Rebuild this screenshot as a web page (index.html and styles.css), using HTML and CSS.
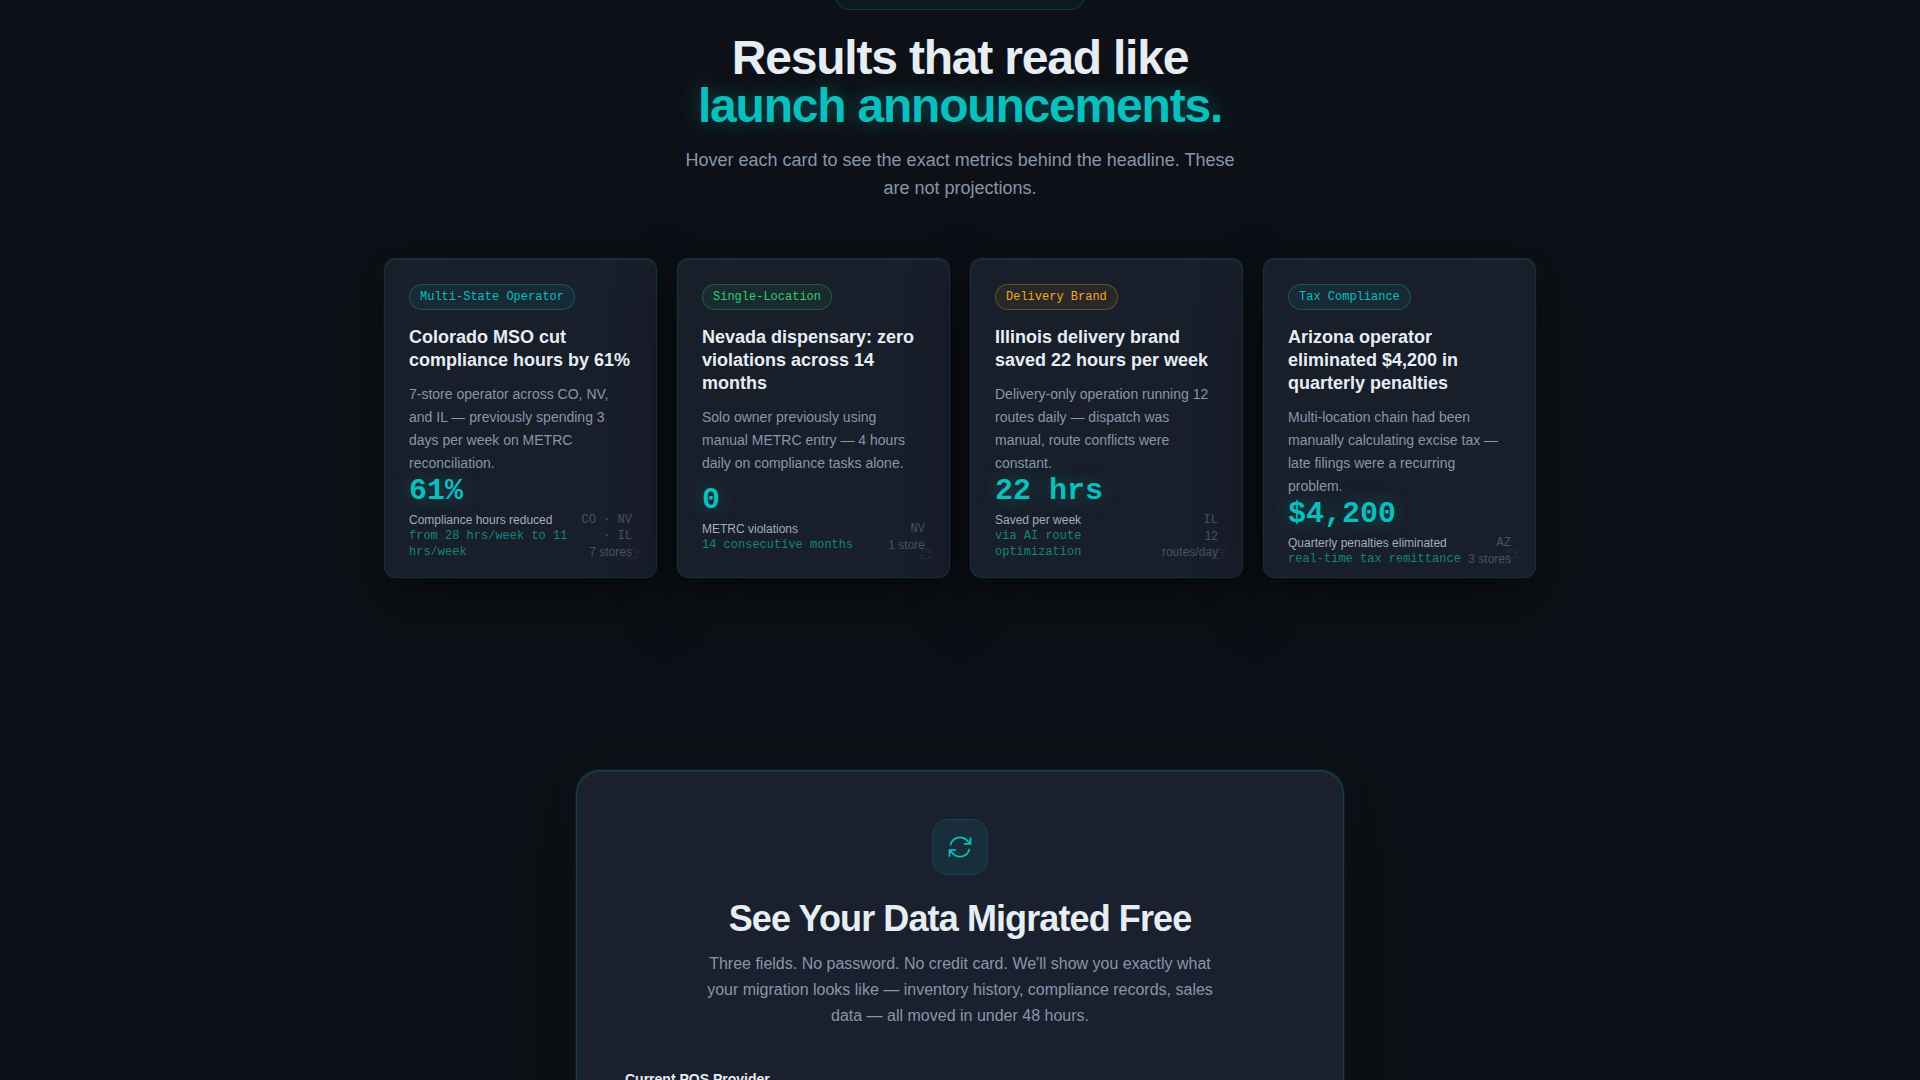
FILE: index.html
```html
<!DOCTYPE html>
<html lang="en">
<head>
<meta charset="utf-8">
<meta name="viewport" content="width=device-width, initial-scale=1">
<title>Results and free migration</title>
<link rel="stylesheet" href="styles.css">
</head>
<body>
<svg class="sprite" aria-hidden="true">
  <symbol id="refresh" viewBox="0 0 24 24">
    <path fill="none" stroke="currentColor" stroke-width="1.5" stroke-linecap="round" stroke-linejoin="round" d="M16.023 9.348h4.992v-.001M2.985 19.644v-4.992m0 0h4.992m-4.993 0 3.181 3.183a8.25 8.25 0 0 0 13.803-3.7M4.031 9.865a8.25 8.25 0 0 1 13.803-3.7l3.181 3.182m0-4.991v4.99"/>
  </symbol>
</svg>
<main>
  <section class="results">
    <div class="eyebrow"></div>
    <h2 class="results-title">Results that read like<br><span class="glow">launch announcements.</span></h2>
    <p class="results-lead">Hover each card to see the exact metrics behind the headline. These are not projections.</p>
    <div class="cards">
      <article class="card">
        <span class="tag tag-teal">Multi-State Operator</span>
        <h3 class="card-title">Colorado MSO cut compliance hours by 61%</h3>
        <p class="card-text">7-store operator across CO, NV, and IL — previously spending 3 days per week on METRC reconciliation.</p>
        <div class="card-foot">
          <div class="metric">
            <div class="value">61%</div>
            <div class="label">Compliance hours reduced</div>
            <div class="detail">from 28 hrs/week to 11 hrs/week</div>
          </div>
          <div class="meta">
            <div class="states">CO · NV · IL</div>
            <div>7 stores</div>
          </div>
        </div>
        <svg class="flip" aria-hidden="true"><use href="#refresh"/></svg>
      </article>
      <article class="card">
        <span class="tag tag-green">Single-Location</span>
        <h3 class="card-title">Nevada dispensary: zero violations across 14 months</h3>
        <p class="card-text">Solo owner previously using manual METRC entry — 4 hours daily on compliance tasks alone.</p>
        <div class="card-foot">
          <div class="metric">
            <div class="value">0</div>
            <div class="label">METRC violations</div>
            <div class="detail">14 consecutive months</div>
          </div>
          <div class="meta">
            <div class="states">NV</div>
            <div>1 store</div>
          </div>
        </div>
        <svg class="flip" aria-hidden="true"><use href="#refresh"/></svg>
      </article>
      <article class="card">
        <span class="tag tag-amber">Delivery Brand</span>
        <h3 class="card-title">Illinois delivery brand saved 22 hours per week</h3>
        <p class="card-text">Delivery-only operation running 12 routes daily — dispatch was manual, route conflicts were constant.</p>
        <div class="card-foot">
          <div class="metric">
            <div class="value">22 hrs</div>
            <div class="label">Saved per week</div>
            <div class="detail">via AI route optimization</div>
          </div>
          <div class="meta">
            <div class="states">IL</div>
            <div>12 routes/day</div>
          </div>
        </div>
        <svg class="flip" aria-hidden="true"><use href="#refresh"/></svg>
      </article>
      <article class="card">
        <span class="tag tag-teal">Tax Compliance</span>
        <h3 class="card-title">Arizona operator eliminated $4,200 in quarterly penalties</h3>
        <p class="card-text">Multi-location chain had been manually calculating excise tax — late filings were a recurring problem.</p>
        <div class="card-foot">
          <div class="metric">
            <div class="value">$4,200</div>
            <div class="label">Quarterly penalties eliminated</div>
            <div class="detail">real-time tax remittance</div>
          </div>
          <div class="meta">
            <div class="states">AZ</div>
            <div>3 stores</div>
          </div>
        </div>
        <svg class="flip" aria-hidden="true"><use href="#refresh"/></svg>
      </article>
    </div>
  </section>
  <section class="migrate">
    <form class="panel">
      <div class="panel-icon"><svg aria-hidden="true"><use href="#refresh"/></svg></div>
      <h2 class="panel-title">See Your Data Migrated Free</h2>
      <p class="panel-lead">Three fields. No password. No credit card. We'll show you exactly what your migration looks like — inventory history, compliance records, sales data — all moved in under 48 hours.</p>
      <label class="field-label" for="pos">Current POS Provider</label>
      <select class="field" id="pos"><option></option></select>
    </form>
  </section>
</main>
</body>
</html>
```
FILE: styles.css
```css
:root {
  --bg: #0d1117;
  --teal: #0abfbc;
  --text: #e6edf3;
  --muted: #8896ab;
  --sans: "Liberation Sans", Arial, sans-serif;
  --mono: "Liberation Mono", "Courier New", monospace;
}

* {
  box-sizing: border-box;
  margin: 0;
}

body {
  height: 100vh;
  overflow: hidden;
  background: var(--bg);
  color: var(--text);
  font-family: var(--sans);
}

.sprite {
  display: none;
}

.results {
  display: flex;
  flex-direction: column;
  align-items: center;
  padding: 0 24px 96px;
}

.eyebrow {
  width: 252px;
  height: 34px;
  margin-top: -24px;
  border: 1px solid rgba(10, 191, 188, 0.2);
  border-radius: 16px;
  background: rgba(10, 191, 188, 0.06);
}

.results-title {
  margin-top: 24px;
  font-size: 48px;
  line-height: 48px;
  letter-spacing: -0.025em;
  text-align: center;
}

.glow {
  color: var(--teal);
  text-shadow: 0 0 20px rgba(10, 191, 188, 0.4);
}

.results-lead {
  max-width: 576px;
  margin: 16px 0 56px;
  color: var(--muted);
  font-size: 18px;
  line-height: 28px;
  text-align: center;
}

.cards {
  display: grid;
  grid-template-columns: repeat(4, 1fr);
  gap: 20px;
  width: 100%;
  max-width: 1152px;
}

.card {
  position: relative;
  display: flex;
  flex-direction: column;
  height: 320px;
  padding: 25px 24px 24px;
  border: 1px solid rgba(10, 191, 188, 0.12);
  border-radius: 12px;
  background: #181e2a;
  box-shadow: 0 24px 64px rgba(0, 0, 0, 0.4), 0 8px 24px rgba(0, 0, 0, 0.2), 0 0 0 1px rgba(10, 191, 188, 0.05), inset 0 1px 0 rgba(255, 255, 255, 0.05);
}

.tag {
  align-self: flex-start;
  padding: 3px 10px;
  border: 1px solid;
  border-radius: 13px;
  font-family: var(--mono);
  font-size: 12px;
  line-height: 18px;
}

.tag-teal {
  border-color: rgba(10, 191, 188, 0.3);
  background: rgba(10, 191, 188, 0.08);
  color: var(--teal);
}

.tag-green {
  border-color: rgba(46, 204, 113, 0.3);
  background: rgba(46, 204, 113, 0.08);
  color: #2ecc71;
}

.tag-amber {
  border-color: rgba(245, 166, 35, 0.3);
  background: rgba(245, 166, 35, 0.08);
  color: #f5a623;
}

.card-title {
  margin-top: 16px;
  font-size: 18px;
  line-height: 23px;
}

.card-text {
  margin-top: 11px;
  color: var(--muted);
  font-size: 14px;
  line-height: 23px;
}

.card-foot {
  display: flex;
  align-items: flex-end;
  justify-content: space-between;
  margin-top: auto;
  font-size: 12px;
  line-height: 16px;
}

.value {
  margin-bottom: 4px;
  color: var(--teal);
  font-family: var(--mono);
  font-size: 30px;
  font-weight: 700;
  line-height: 33px;
  text-shadow: 0 0 20px rgba(10, 191, 188, 0.4);
}

.label {
  color: #a4adbd;
}

.detail {
  color: #118582;
  font-family: var(--mono);
}

.meta {
  color: #4a5262;
  text-align: right;
}

.states {
  font-family: var(--mono);
}

.flip {
  position: absolute;
  right: 16px;
  bottom: 16px;
  width: 14px;
  height: 14px;
  color: #4a5262;
  opacity: 0.35;
}

.migrate {
  padding: 96px 24px;
}

.panel {
  display: flex;
  flex-direction: column;
  align-items: center;
  max-width: 768px;
  margin: 0 auto;
  padding: 48px;
  border: 1px solid rgba(10, 191, 188, 0.2);
  border-radius: 24px;
  background: #1a202d;
  box-shadow: 0 24px 80px rgba(0, 0, 0, 0.5), 0 0 40px rgba(10, 191, 188, 0.06), 0 0 0 1px rgba(10, 191, 188, 0.1), inset 0 1px 0 rgba(10, 191, 188, 0.15);
}

.panel-icon {
  display: grid;
  place-items: center;
  width: 56px;
  height: 56px;
  border: 1px solid rgba(10, 191, 188, 0.15);
  border-radius: 16px;
  background: rgba(10, 191, 188, 0.1);
  color: var(--teal);
}

.panel-icon svg {
  width: 28px;
  height: 28px;
}

.panel-title {
  margin-top: 24px;
  font-size: 36px;
  line-height: 40px;
  letter-spacing: -0.025em;
  text-align: center;
}

.panel-lead {
  max-width: 512px;
  margin: 12px 0 40px;
  color: var(--muted);
  font-size: 16px;
  line-height: 26px;
  text-align: center;
}

.field-label {
  align-self: flex-start;
  font-size: 14px;
  font-weight: 700;
  line-height: 20px;
}

.field {
  width: 100%;
  height: 48px;
  margin-top: 8px;
  border: 1px solid rgba(10, 191, 188, 0.2);
  border-radius: 12px;
  background: var(--bg);
  color: var(--text);
}
```
